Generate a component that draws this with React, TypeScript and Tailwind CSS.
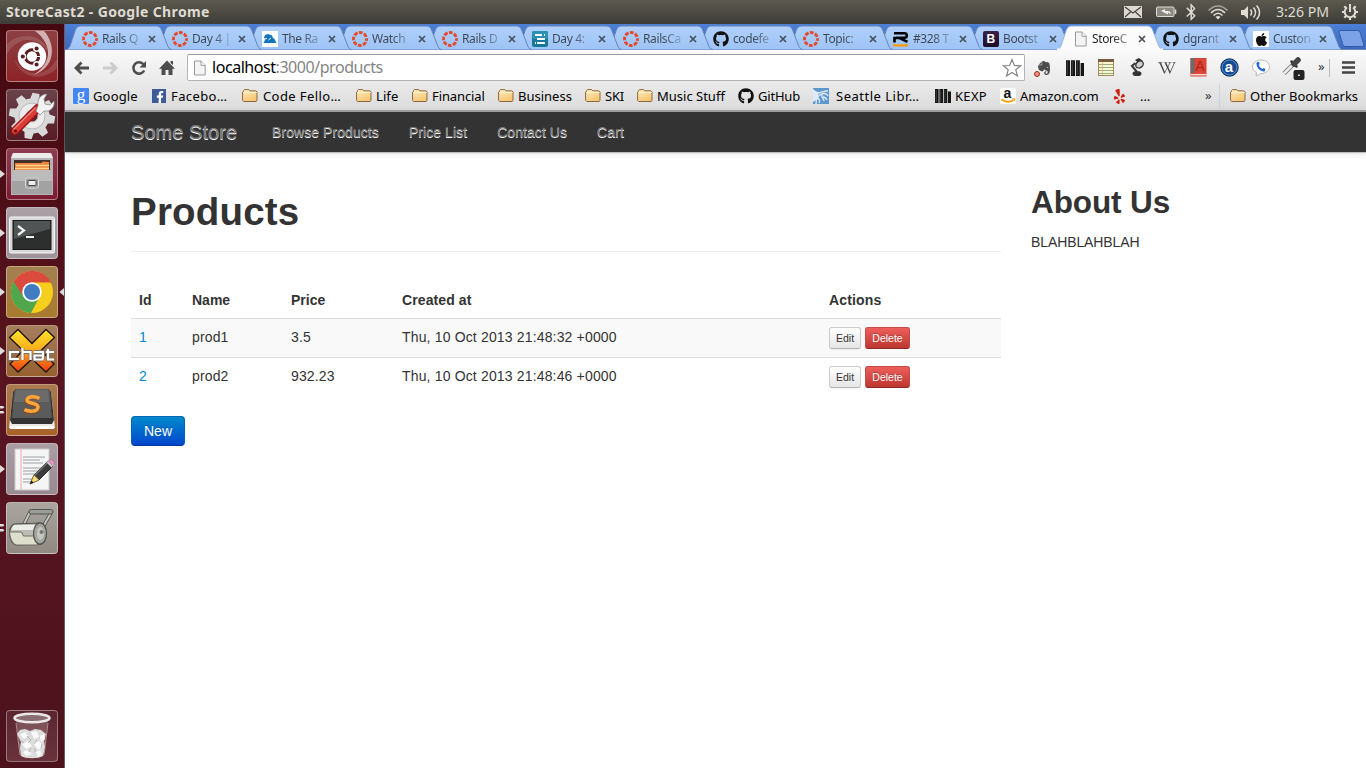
import React from "react";
import { FaGithub, FaApple, FaYelp, FaBluetoothB, FaFacebookF, FaEvernote, FaWikipediaW } from "react-icons/fa";

const UI = "font-['Noto_Sans','Open_Sans',sans-serif]";

/* ---------- small favicons ---------- */

const RailsRing = () => (
  <svg width="16" height="16" viewBox="0 0 16 16">
    <circle cx="8" cy="8" r="6.5" fill="none" stroke="#e5492c" strokeWidth="2.9" strokeDasharray="3.7 1.405" strokeDashoffset="1.85" />
  </svg>
);

const Mountain = () => (
  <svg width="16" height="16" viewBox="0 0 16 16">
    <rect width="16" height="16" fill="#fff" />
    <path d="M1.500 12l1.500-3-1-2.500L3 4l3-1 4 1.500 1 2.500 1.500 1 2 4z" fill="#1277bd" />
    <path d="M2 8l3-.5M6.500 9l2.500-2" stroke="#fff" strokeWidth="1" />
  </svg>
);

const DayIcon = () => (
  <svg width="16" height="16" viewBox="0 0 16 16">
    <rect width="16" height="16" rx="2" fill="#16799c" />
    <rect width="16" height="8" rx="2" fill="#2c91b3" />
    <path d="M3 4h7M5 8h8M5 12h8M12 4h1M3 12h1" stroke="#fff" strokeWidth="2" />
  </svg>
);

const RIcon = () => (
  <svg width="16" height="16" viewBox="0 0 16 16">
    <path d="M1 2.2h10.5a2.3 2.3 0 0 1 0 4.6H3M1.5 11.5V7h5l8 3.8" fill="none" stroke="#000" strokeWidth="2.6" />
    <rect x="0" y="13.3" width="15" height="2.2" fill="#f90" />
  </svg>
);

const BIcon = () => (
  <div className="flex h-4 w-4 items-center justify-center rounded-[2px] bg-linear-to-b from-[#3c2148] to-[#1d0c28] font-['Liberation_Sans',sans-serif] text-[12px] leading-none font-bold text-white">
    B
  </div>
);

const PageIcon = () => (
  <svg width="14" height="16" viewBox="0 0 14 16">
    <path d="M1.5 1h6.7l4 4v10H1.5z" fill="#f4f4f4" stroke="#999" />
    <path d="M8 1v4.3h4.3" fill="#fff" stroke="#999" />
  </svg>
);

const AppleFav = () => (
  <div className="flex h-4 w-4 items-center justify-center bg-white">
    <FaApple size={15} color="#111" />
  </div>
);

const Folder = () => (
  <svg width="16" height="16" viewBox="0 0 16 16">
    <defs>
      <linearGradient id="fold" x1="0" y1="0" x2="0.5" y2="1">
        <stop offset="0" stopColor="#fdeec0" />
        <stop offset="1" stopColor="#f6c674" />
      </linearGradient>
    </defs>
    <path d="M1.5 3.5v-1l.8-.9h4.5l1 1.2h6l1.2 1v8.800l-1 .9H1.600l-1-1V4z" fill="url(#fold)" stroke="#8d6840" strokeWidth="1" />
    <path d="M1.5 4.5h13" stroke="#fff3d0" strokeWidth="1" />
  </svg>
);

const GoogleFav = () => (
  <div className="flex h-4 w-4 items-center justify-center rounded-[1px] bg-[#4285f4] pb-[3px] font-['Liberation_Serif',serif] text-[17px] leading-none text-white">
    g
  </div>
);

const FbFav = () => (
  <div className="flex h-[14px] w-[14px] items-end justify-end bg-[#3f5a99]">
    <FaFacebookF size={12} color="#fff" />
  </div>
);

const LibFav = () => (
  <svg width="16" height="16" viewBox="0 0 16 16">
    <rect width="16" height="16" fill="#5f97cd" />
    <path d="M0 1c2 2 4 3 6 3l-1 2c1 3-1 6-5 8z" fill="#dcebf7" />
    <path d="M3 16c0-5 2-9 6-10 3-1 5 0 6 2M6 15c1-2 0-4-1-5M9 7c-1 3 2 4 2 6M10 9c2 0 3 1 4 3M5 5c3 0 5-2 10-2" fill="none" stroke="#dcebf7" strokeWidth="1.400" />
  </svg>
);

const Bars = ({ size = 16 }: { size?: number }) => (
  <svg width={size} height={size} viewBox="0 0 16 16">
    <path d="M0 1h3.600v14H0zM4.400 1H8v14H4.400zM8.800 1h3.500v14H8.800zM13 3.500h3v11.500h-3z" fill="#161616" />
    <path d="M1.200 2v12M5.600 2v12M10 2v12" stroke="#666" strokeWidth=".5" />
  </svg>
);

const AmazonFav = () => (
  <div className="flex h-4 w-4 items-center justify-center rounded-[2px] bg-white">
    <svg width="16" height="16" viewBox="0 0 16 16" className="overflow-visible">
      <text x="3.600" y="9.800" fontFamily="Liberation Sans" fontWeight="bold" fontSize="14" fill="#111">a</text>
      <path d="M1.500 11.500c4 3 9 3 12 .7" fill="none" stroke="#f90" strokeWidth="1.600" />
      <path d="M11.800 11l3-.3-.8 2.800" fill="none" stroke="#f90" />
    </svg>
  </div>
);

/* ---------- tabs ---------- */

type Tab = { icon: React.ReactNode; text: string; active?: boolean };

const tabs: Tab[] = [
  { icon: <RailsRing />, text: "Rails Q" },
  { icon: <RailsRing />, text: "Day 4 |" },
  { icon: <Mountain />, text: "The Ra" },
  { icon: <RailsRing />, text: "Watch" },
  { icon: <RailsRing />, text: "Rails D" },
  { icon: <DayIcon />, text: "Day 4:" },
  { icon: <RailsRing />, text: "RailsCa" },
  { icon: <FaGithub size={16} color="#111" />, text: "codefe" },
  { icon: <RailsRing />, text: "Topic:" },
  { icon: <RIcon />, text: "#328 T" },
  { icon: <BIcon />, text: "Bootst" },
  { icon: <PageIcon />, text: "StoreC", active: true },
  { icon: <FaGithub size={16} color="#111" />, text: "dgrant" },
  { icon: <AppleFav />, text: "Custon" },
];

const TabItem = ({ tab, z }: { tab: Tab; z: number }) => (
  <div className="relative flex h-[26px] w-[90.1px] shrink-0 items-center pt-1 pl-[17px]" style={{ zIndex: z }}>
    <svg className="absolute top-0 left-0" width="108" height="26" viewBox="0 0 108 26">
      <defs>
        <linearGradient id="tabblue" x1="0" y1="0" x2="0" y2="1">
          <stop offset="0" stopColor="#b0d0fa" />
          <stop offset="1" stopColor="#9dc3f5" />
        </linearGradient>
      </defs>
      <path
        d="M1 26C4 25 5 22 6 19L10 7C11.500 3 13 2 16 2H91C94 2 95.500 3 97 7L102 20C103 23 104 25 107 26Z"
        fill={tab.active ? "#fbfbfb" : "url(#tabblue)"}
        stroke={tab.active ? "#9fb4d6" : "#6585b8"}
        strokeWidth="1"
      />
      {tab.active && <path d="M1 25.500H107" stroke="#fbfbfb" strokeWidth="2" />}
    </svg>
    <span className="relative flex h-4 w-4 items-center justify-center">{tab.icon}</span>
    <span className="relative ml-1 flex w-[38px] pb-[2px]">
      <span
        className={`${UI} w-[44px] shrink-0 origin-left scale-x-[0.92] bg-linear-to-r bg-clip-text text-[13px] leading-[18px] tracking-[-0.4px] whitespace-nowrap text-transparent ${
          tab.active ? "from-[#222] from-50% to-[#22222230]" : "from-[#3c4654] from-50% to-[#3c465420]"
        }`}
      >
        {tab.text}
      </span>
    </span>
    <svg className="relative ml-[8px] shrink-0" width="8" height="8" viewBox="0 0 8 8">
      <path d="M1 1l6 6M7 1L1 7" stroke="#46505e" strokeWidth="1.700" />
    </svg>
  </div>
);

/* ---------- bookmarks ---------- */

const bookmarks: { icon: React.ReactNode; text: string; w: string; gap: string; track: string }[] = [
  { icon: <GoogleFav />, text: "Google", w: "w-[79px]", gap: "gap-1", track: "tracking-[0.15px]" },
  { icon: <FbFav />, text: "Facebo…", w: "w-[90px]", gap: "gap-[5px]", track: "tracking-[0.4px]" },
  { icon: <Folder />, text: "Code Fello…", w: "w-[114px]", gap: "gap-[5px]", track: "tracking-[0.4px]" },
  { icon: <Folder />, text: "Life", w: "w-[56px]", gap: "gap-1", track: "tracking-[0.1px]" },
  { icon: <Folder />, text: "Financial", w: "w-[86px]", gap: "gap-1", track: "tracking-[-0.1px]" },
  { icon: <Folder />, text: "Business", w: "w-[87px]", gap: "gap-1", track: "tracking-[0px]" },
  { icon: <Folder />, text: "SKI", w: "w-[52px]", gap: "gap-1", track: "tracking-[-0.2px]" },
  { icon: <Folder />, text: "Music Stuff", w: "w-[101px]", gap: "gap-1", track: "tracking-[0px]" },
  { icon: <FaGithub size={16} color="#111" />, text: "GitHub", w: "w-[75px]", gap: "gap-1", track: "tracking-[-0.2px]" },
  { icon: <LibFav />, text: "Seattle Libr…", w: "w-[122px]", gap: "gap-[7px]", track: "tracking-[0.5px]" },
  { icon: <Bars />, text: "KEXP", w: "w-[65px]", gap: "gap-1", track: "tracking-[0.3px]" },
  { icon: <AmazonFav />, text: "Amazon.com", w: "w-[112px]", gap: "gap-1", track: "tracking-[-0.1px]" },
  { icon: <FaYelp size={15} color="#cc1f10" />, text: "…", w: "w-[92px]", gap: "gap-[13px]", track: "tracking-[0px]" },
];

/* ---------- launcher ---------- */

const Gear = () => (
  <svg width="50" height="50" viewBox="1 1 50 50">
    <g fill="#d9d9d9">
      {[0, 45, 90, 135, 180, 225, 270, 315].map((a) => (
        <path key={a} d="M21 12l1.500-8h7l1.500 8z" transform={`rotate(${a + 10} 26 27)`} />
      ))}
      <circle cx="26" cy="27" r="17.500" />
    </g>
    <circle cx="26" cy="27" r="13" fill="#ececec" stroke="#bbb" />
    <circle cx="26" cy="27" r="6" fill="#6b2028" stroke="#bbb" />
    <path d="M9 42L32 19" stroke="#941212" strokeWidth="8.500" strokeLinecap="round" />
    <path d="M9 42L31 20" stroke="#db3c35" strokeWidth="6" strokeLinecap="round" />
    <path d="M8 40L29 19" stroke="#f08880" strokeWidth="1.300" strokeLinecap="round" />
    <circle cx="9.500" cy="42" r="1.500" fill="#5a0e0e" />
    <path d="M30 22l2-5c-1-7 3-12 9-12l-3 5 1 5 5 1 4-4c1 6-3 11-10 10l-4 4z" fill="#f3f3f3" stroke="#8c8c8c" strokeWidth=".8" />
  </svg>
);

const UbuntuLogo = () => (
  <svg width="50" height="50" viewBox="1 1 50 50">
    <g fill="#fff" fillOpacity=".13">
      <path d="M1 14C14 2 38 2 44 25C40 16 30 9 20 10C12 11 6 16 1 24z" />
      <path d="M51 38C38 52 14 50 8 28C12 37 22 44 32 43C40 42 46 37 51 29z" />
      <path d="M38 1C50 14 50 38 27 45C36 40 43 31 42 21C41 13 36 6 29 1z" fillOpacity=".6" />
    </g>
    <circle cx="26" cy="26.500" r="14.200" fill="#fff" />
    <circle cx="26" cy="26.500" r="6.700" fill="none" stroke="#591c20" strokeWidth="3" />
    <g stroke="#fff" strokeWidth="1.400" fill="#591c20">
      <circle cx="16.800" cy="26.500" r="2.800" />
      <circle cx="30.600" cy="18.500" r="2.800" />
      <circle cx="30.600" cy="34.500" r="2.800" />
    </g>
    <path d="M31 26.500h4M22 19.500l-2-3.500M22 33.500l-2 3.500" stroke="#fff" strokeWidth="1.200" />
  </svg>
);

const Files = () => (
  <svg width="50" height="50" viewBox="1 1 50 50">
    <path d="M7 5h38l2 4v38H5V9z" fill="#b4b4b4" />
    <path d="M7 5h38l1.500 5h-41z" fill="#ececec" />
    <rect x="8" y="12" width="36" height="13" fill="#40302a" />
    <path d="M9 15h26l2-1.500 6 .5v9H9z" fill="#e9863c" />
    <path d="M10 17.500h33M9 20.500h34" stroke="#fbd38a" strokeWidth="1.300" />
    <path d="M7 22h38l1 2v22H6V24z" fill="#a2a2a2" />
    <path d="M7 22h38l1 2v9H6v-9z" fill="#bcbcbc" />
    <rect x="19.500" y="30" width="13" height="10" rx="2" fill="#999" stroke="#d8d8d8" />
    <rect x="22" y="32.500" width="8" height="5" rx="1" fill="#eee" stroke="#444" />
  </svg>
);

const Terminal = () => (
  <svg width="50" height="50" viewBox="1 1 50 50">
    <rect x="3.500" y="10" width="45" height="36" rx="1.500" fill="#d9d9d9" stroke="#f6f6f6" />
    <rect x="7" y="13.500" width="38" height="29" fill="#2d2f2f" stroke="#191919" />
    <path d="M8 14h36v8L8 32z" fill="#515454" />
    <path d="M12 19l6 4.500-6 4.500" fill="none" stroke="#f0f0f0" strokeWidth="2.200" />
    <path d="M20 30h8" stroke="#f0f0f0" strokeWidth="2" />
  </svg>
);

const Chrome = () => (
  <svg width="50" height="50" viewBox="1 1 50 50">
    <circle cx="26" cy="26" r="21" fill="#f5cf1b" />
    <path d="M26 26L7.800 15.500A21 21 0 0 0 25 47l9-17z" fill="#4fa64b" />
    <path d="M26 16.500H45.100A21 21 0 0 0 7.800 15.500L17 30z" fill="#dc4a3e" />
    <circle cx="26" cy="26" r="9.800" fill="#fff" />
    <circle cx="26" cy="26" r="8" fill="#3f7cc0" />
  </svg>
);

const XChat = () => (
  <svg width="50" height="50" viewBox="1 1 50 50">
    <defs>
      <linearGradient id="xg" x1="0" y1="0" x2="0" y2="1">
        <stop offset="0" stopColor="#ffe62b" />
        <stop offset=".5" stopColor="#fba81b" />
        <stop offset="1" stopColor="#f23c10" />
      </linearGradient>
    </defs>
    <path d="M12 4.500l14 14 14-14 8.500 8L35 25.500 48 39l-8 8-14-13-14 13-8-8 13-13.500L3.500 12.500z" fill="url(#xg)" stroke="#1b1208" strokeWidth="1.300" />
    <g fill="none" strokeLinejoin="miter">
      <path d="M13 27H4v7h9M16.500 23v12M16.500 27h8v8M28 27h9v7.500M37 30.500h-8.500v4H37M42 24v10.500h6M40 27h8" stroke="#77706a" strokeWidth="3.800" />
      <path d="M13 27H4v7h9M16.500 23v12M16.500 27h8v8M28 27h9v7.500M37 30.500h-8.500v4H37M42 24v10.500h6M40 27h8" stroke="#fff" strokeWidth="2.200" />
    </g>
  </svg>
);

const Sublime = () => (
  <svg width="50" height="50" viewBox="1 1 50 50">
    <path d="M7 8h38l4 36H3z" fill="#e9e9e6" />
    <path d="M4 42h44v3H4z" fill="#fff" />
    <path d="M10 5h32l3 3 3 28-2 4H6l-2-4L7 8z" fill="#333" />
    <path d="M10 5h32l2 3 2 26H6L8 8z" fill="#5b5b5b" />
    <path d="M10 6h32l1 12H8z" fill="#6b6b6b" />
    <path d="M33.500 15.500c-3-2-11-3-12.500 1-1 5 12 2.500 11 8-1 5-10 4-13.500 2" fill="none" stroke="#8f4312" strokeOpacity=".5" strokeWidth="5.500" />
    <path d="M33.500 14.500c-3-2-11-3-12.500 1-1 5 12 2.500 11 8-1 5-10 4-13.500 2" fill="none" stroke="#ffa53a" strokeWidth="3.500" />
  </svg>
);

const Gedit = () => (
  <svg width="50" height="50" viewBox="1 1 50 50">
    <rect x="9" y="6" width="34" height="41" fill="#f5f5f6" stroke="#c9c9cc" />
    <path d="M15 6v41" stroke="#f0aaa5" />
    <path d="M17 14h22M17 17h17M17 20h20M17 25h22M17 28h19M17 31h20M17 36h12M17 39h9" stroke="#9fa1a8" strokeWidth="1" />
    <path d="M24 41l4-9 14-14 5 5-14 14z" fill="#3b3b3b" stroke="#161616" strokeWidth=".8" />
    <path d="M29 32L42 19" stroke="#777" strokeWidth="1.500" />
    <path d="M24 41l4-9 5 5z" fill="#f2de72" stroke="#81712f" strokeWidth=".6" />
    <path d="M24 41l1.500-3.500 2 2z" fill="#111" />
    <path d="M40.500 19.500l3-3 5 5-3 3z" fill="#d0d0d0" />
    <path d="M42.500 18l1-1c3-1.500 6 2 4 4.500l-1 1z" fill="#e79ac4" stroke="#a45f86" strokeWidth=".6" />
  </svg>
);

const Roller = () => (
  <svg width="50" height="50" viewBox="1 1 50 50">
    <path d="M17 24l7-14M34 30l11-19" stroke="#555753" strokeWidth="3.600" />
    <path d="M17 24l7-14M34 30l11-19" stroke="#c6c8c3" strokeWidth="1.800" />
    <rect x="23" y="7.500" width="24" height="4.500" rx="2.200" fill="#9a9d95" stroke="#555753" />
    <path d="M8 22l26-1v21l-24 1c-8-3-8-18-2-21z" fill="#bdbdb5" stroke="#4e504c" strokeWidth="1.200" />
    <path d="M8 23h25v5H5z" fill="#ecece8" />
    <path d="M3.500 30h12l2 4h14v9H10c-4-2-6-7-6.500-13z" fill="#dddecb" stroke="#6e7068" />
    <ellipse cx="34" cy="31.500" rx="6.500" ry="10.700" fill="#a3a59f" stroke="#4e504c" strokeWidth="1.200" />
    <ellipse cx="34.500" cy="31.500" rx="3.500" ry="6.500" fill="#c5c6c0" />
    <circle cx="35.500" cy="30" r="2" fill="#777" />
  </svg>
);

const Trash = () => (
  <svg width="50" height="50" viewBox="1 1 50 50">
    <path d="M10 9l4 36c3 4 21 4 24 0l4-36z" fill="#b99aa0" fillOpacity=".35" />
    <path d="M11 24l3-4 5-1 5 2 5-2 6 1 5 4-2 7 1 6-2 9c-5 3-17 3-22 0l-1-8 1-6z" fill="#dcdcdc" />
    <path d="M14 25l5-3 3 4-4 3zM25 22l6-1 2 6-5 2zM34 26l4-2 1 5-4 3zM16 34l6-3 4 5-6 3zM27 33l6-2 4 5-5 4zM17 42l4-2 5 4-6 2zM30 42l4-2 2 4-4 3z" fill="#fafafa" />
    <path d="M21 26l4 4-3 3M31 30l-3 4M15 31l3 2M36 34l-1 4M25 38l-2 4M29 38v4" fill="none" stroke="#b4b4b4" strokeWidth="1" />
    <ellipse cx="26" cy="8" rx="17.500" ry="4.300" fill="#8a6d72" stroke="#e8e8e8" strokeWidth="2.600" />
    <path d="M10 13l4 32M42 13l-4 32" stroke="#d6c6c9" strokeOpacity=".6" />
  </svg>
);

type Pip = "none" | "one" | "two" | "both";

const launcher: { icon: React.ReactNode; bg: string; pip: Pip }[] = [
  { icon: <UbuntuLogo />, bg: "from-[#8c4043] to-[#8d2227]", pip: "none" },
  { icon: <Gear />, bg: "from-[#6b434a] to-[#571b26]", pip: "none" },
  { icon: <Files />, bg: "from-[#8d3d50] to-[#7d1a32]", pip: "one" },
  { icon: <Terminal />, bg: "from-[#aaa0a5] to-[#9e9399]", pip: "one" },
  { icon: <Chrome />, bg: "from-[#a28052] to-[#a97b2d]", pip: "both" },
  { icon: <XChat />, bg: "from-[#a47e5e] to-[#97602f]", pip: "one" },
  { icon: <Sublime />, bg: "from-[#a97a52] to-[#a66329]", pip: "two" },
  { icon: <Gedit />, bg: "from-[#aa9ea3] to-[#998a92]", pip: "one" },
  { icon: <Roller />, bg: "from-[#aaa59f] to-[#918a82]", pip: "two" },
];

const Tile = ({ icon, bg, pip }: { icon: React.ReactNode; bg: string; pip: Pip }) => (
  <div className="flex h-[52px] w-full items-center">
    <div className="flex w-[6px] shrink-0 items-center">
      {pip !== "none" && (
        <svg width="5" height="10" viewBox="0 0 5 10">
          {pip === "two" ? (
            <path d="M0 1h3l1.500 1.200L3 3.500H0zM0 6h3l1.500 1.200L3 8.500H0z" fill="#ddd" />
          ) : (
            <path d="M0 1l5 4-5 4z" fill="#ddd" />
          )}
        </svg>
      )}
    </div>
    <div className={`flex h-[52px] w-[52px] shrink-0 items-center justify-center overflow-hidden rounded-[4px] border border-white/35 bg-linear-to-b ${bg}`}>{icon}</div>
    {pip === "both" && (
      <svg width="5" height="10" viewBox="0 0 5 10" className="ml-[1px]">
        <path d="M5 1L.5 5 5 9z" fill="#ddd" />
      </svg>
    )}
  </div>
);

/* ---------- page ---------- */

const rows = [
  { id: "1", name: "prod1", price: "3.5", created: "Thu, 10 Oct 2013 21:48:32 +0000" },
  { id: "2", name: "prod2", price: "932.23", created: "Thu, 10 Oct 2013 21:48:46 +0000" },
];

const Store = () => (
  <div className="flex min-h-0 flex-1 flex-col bg-white font-['Liberation_Sans',Arial,sans-serif] text-[14px] leading-5 text-[#333]">
    <nav className="flex h-10 shrink-0 items-center bg-[#333] pl-[66px] shadow-[0_1px_1px_rgba(0,0,0,0.2),0_1px_8px_rgba(0,0,0,0.12)]">
      <span className="w-[141px] text-[20px] tracking-[0.05px] text-[#777] [text-shadow:0_1px_0_#fff]">Some Store</span>
      <div className="flex gap-[30px] tracking-[0.07px] text-[#777] [text-shadow:0_1px_0_#fff]">
        <span>Browse Products</span>
        <span>Price List</span>
        <span>Contact Us</span>
        <span>Cart</span>
      </div>
    </nav>
    <div className="flex gap-[30px] pl-[66px]">
      <main className="w-[870px]">
        <h1 className="mt-[40px] border-b border-[#eee] pb-[19px] text-[38.5px] leading-[40px] font-bold tracking-[0.2px]">Products</h1>
        <table className="mt-[30px] w-[870px] table-fixed border-collapse text-left">
          <thead>
            <tr className="h-9">
              <th className="w-[53px] px-2">Id</th>
              <th className="w-[99px] px-2">Name</th>
              <th className="w-[111px] px-2">Price</th>
              <th className="w-[427px] px-2 tracking-[0.1px]">Created at</th>
              <th className="px-2 tracking-[0.15px]">Actions</th>
            </tr>
          </thead>
          <tbody>
            {rows.map((r) => (
              <tr key={r.id} className="h-[39px] border-t border-[#ddd] align-top odd:bg-[#f9f9f9]">
                <td className="px-2 pt-2 text-[#08c]">{r.id}</td>
                <td className="px-2 pt-2 tracking-[0.15px]">{r.name}</td>
                <td className="px-2 pt-2 tracking-[0.15px]">{r.price}</td>
                <td className="px-2 pt-2 tracking-[0.16px]">{r.created}</td>
                <td className="px-2 pt-2">
                  <div className="flex gap-1 text-[10.5px]">
                    <button className="h-[22px] w-8 rounded-[3px] border border-[#ccc] border-b-[#b3b3b3] bg-linear-to-b from-white to-[#e6e6e6] shadow-[0_1px_2px_rgba(0,0,0,0.05)]">
                      Edit
                    </button>
                    <button className="h-[22px] w-[45px] rounded-[3px] border border-[#c44b46] border-b-[#8f2a25] bg-linear-to-b from-[#ee5f5b] to-[#bd362f] text-white [text-shadow:0_-1px_0_rgba(0,0,0,0.25)]">
                      Delete
                    </button>
                  </div>
                </td>
              </tr>
            ))}
          </tbody>
        </table>
        <button className="mt-5 h-[30px] w-[54px] rounded-[4px] border border-[#0064b8] border-b-[#003899] bg-linear-to-b from-[#0088cc] to-[#0044cc] text-white [text-shadow:0_-1px_0_rgba(0,0,0,0.25)]">
          New
        </button>
      </main>
      <aside>
        <h2 className="mt-[30px] text-[31.5px] leading-[40px] font-bold tracking-[-0.1px]">About Us</h2>
        <p className="mt-[10px] tracking-[-0.1px]">BLAHBLAHBLAH</p>
      </aside>
    </div>
  </div>
);

const Slot = ({ children, w }: { children: React.ReactNode; w: string }) => (
  <span className={`flex shrink-0 items-center justify-center ${w}`}>{children}</span>
);

export default function App() {
  return (
    <div className="flex h-screen w-screen flex-col overflow-hidden">
      <header className={`${UI} flex h-6 shrink-0 items-center bg-linear-to-b from-[#5c5a4e] to-[#3d3c37] pl-[6px] text-[14px] text-[#dfdbd2]`}>
        <span className="flex-1 leading-6 font-bold tracking-[0.35px]">StoreCast2 - Google Chrome</span>
        <svg width="242" height="24" viewBox="1124 0 242 24" fill="none" stroke="#dfdbd2">
          <rect x="1124" y="6" width="18" height="12" fill="#dfdbd2" stroke="none" />
          <path d="M1125 7l8 6 8-6M1125 17l5.500-5M1141 17l-5.500-5" stroke="#46443e" strokeWidth="1.200" />
          <rect x="1156.500" y="7" width="17.500" height="9.500" rx="1" fill="#8c8981" strokeWidth="1" />
          <path d="M1175.500 9.500v4.500" strokeWidth="1.600" />
          <path d="M1161 11l4-2v2h2l3 .5 1 3-3-2v2l-4-2z" fill="#eee" stroke="none" />
          <g transform="translate(1182 3)">
            <FaBluetoothB size={18} color="#dfdbd2" stroke="none" />
          </g>
          <path d="M1208.500 10.500c6-6 13-6 19 0" strokeOpacity=".6" strokeWidth="1.600" />
          <path d="M1211 13c4.500-4.500 9.500-4.500 14 0M1213.500 15.500c3-3 6-3 9 0" strokeWidth="1.600" />
          <path d="M1215.500 17l2.500 2.500 2.500-2.500c-1.500-1.300-3.500-1.300-5 0z" fill="#dfdbd2" stroke="none" />
          <path d="M1241 10h3l4-4v13l-4-4h-3z" fill="#dfdbd2" stroke="none" />
          <path d="M1250.500 9.500c1.500 2 1.500 4 0 6M1253.500 7.500c2.500 3 2.500 7 0 10M1256.500 5.500c4 4 4 10 0 14" strokeWidth="1.500" />
          <text x="1276" y="17" fontFamily="Noto Sans" fontSize="14" fill="#dfdbd2" stroke="none" textLength="53" lengthAdjust="spacingAndGlyphs">3:26 PM</text>
          <path d="M1347 7.500a5.300 5.300 0 1 0 6 0" strokeWidth="2" />
          <path d="M1350 4v8" strokeWidth="2" />
          <path d="M1342 12h2.500M1355.500 12h2.500M1344.300 6.300l2 2M1355.700 6.300l-2 2M1344.300 17.700l2-2M1355.700 17.700l-2-2M1350 17.500v2.500" strokeWidth="2.200" />
        </svg>
      </header>

      <div className="flex min-h-0 flex-1">
        <aside className="flex w-[65px] shrink-0 flex-col justify-between border-r border-[#6e5a68] bg-linear-to-b from-[#45080f] via-[#591521] to-[#4c121c] pt-[6px] pb-[6px]">
          <div className="flex flex-col gap-[7px]">
            {launcher.map((l, i) => (
              <Tile key={i} {...l} />
            ))}
          </div>
          <Tile icon={<Trash />} bg="from-[#5b2630] to-[#6a333c]" pip="none" />
        </aside>

        <div className="flex min-w-0 flex-1 flex-col">
          <div className="flex h-[26px] shrink-0 overflow-hidden bg-linear-to-b from-[#4d7fd6] to-[#3c69bd] shadow-[inset_0_-1px_0_#6a86b4]">
            {tabs.map((t, i) => (
              <TabItem key={i} tab={t} z={t.active ? 30 : 20 - i} />
            ))}
            <svg className="mt-[6px] ml-[12px] shrink-0" width="26" height="17" viewBox="0 0 26 17">
              <path d="M3 .5h16c2 0 3 1 3.500 3l3 10c.5 2 0 3-2 3H8c-2 0-3-1-3.500-3l-3-10C1 1.500 1 .5 3 .5z" fill="#7ba2e6" stroke="#3259a5" />
            </svg>
          </div>

          <div className="flex h-[62px] shrink-0 flex-col border-b-2 border-[#a2a2a2] bg-linear-to-b from-[#fafafa] to-[#dcdcdc]">
            <div className="flex h-[34px] shrink-0 items-center pt-px pl-[3px]">
              <Slot w="w-7">
                <svg width="16" height="14" viewBox="0 0 16 14" fill="none" stroke="#4d4d4d" strokeWidth="2.800">
                  <path d="M15 7H2M7.500 1.500L2 7l5.500 5.500" />
                </svg>
              </Slot>
              <Slot w="w-7">
                <svg width="16" height="14" viewBox="0 0 16 14" fill="none" stroke="#ccc" strokeWidth="2.800">
                  <path d="M1 7h13M8.500 1.500L14 7l-5.500 5.500" />
                </svg>
              </Slot>
              <Slot w="w-[29px]">
                <svg width="16" height="16" viewBox="0 0 16 16">
                  <path d="M13.200 10.500a5.700 5.700 0 1 1-.7-6.200" fill="none" stroke="#4d4d4d" strokeWidth="2.500" />
                  <path d="M15 1v6.500H8.500z" fill="#4d4d4d" />
                </svg>
              </Slot>
              <Slot w="w-7">
                <svg width="16" height="16" viewBox="0 0 16 16">
                  <path d="M8 .5l8 8.200h-2.500V15h-4v-5h-3v5h-4V8.700H0zM11.500 1h2.500v4l-2.500-2z" fill="#4d4d4d" />
                </svg>
              </Slot>
              <div className="ml-[6px] flex h-[27px] w-[838px] shrink-0 items-center rounded-[2px] border border-[#b4b4b4] border-t-[#999] bg-white pr-[2px] pl-[5px]">
                <PageIcon />
                <span className={`${UI} ml-[5px] flex-1 pb-[2px] text-[16px] leading-6 tracking-[-0.45px] text-[#858585]`}>
                  <span className="text-black">localhost</span>:3000/products
                </span>
                <svg width="20" height="20" viewBox="0 0 20 20">
                  <path d="M10 1.500l2.400 6 6.300.3-4.900 4 1.700 6.200L10 14.500 4.500 18l1.700-6.200-4.900-4 6.300-.3z" fill="#fff" stroke="#858585" strokeWidth="1.200" />
                </svg>
              </div>
              <Slot w="w-9">
                <span className="relative flex h-[18px] w-[18px] items-center justify-end">
                  <FaEvernote size={16} color="#4c4c4c" />
                  <span className="absolute bottom-0 left-0 h-[6px] w-[6px] rounded-full border border-[#9c2f20] bg-[#f09080]" />
                </span>
              </Slot>
              <Slot w="w-[27px]">
                <Bars size={18} />
              </Slot>
              <Slot w="w-[35px]">
                <svg width="16" height="17" viewBox="0 0 16 17">
                  <rect x=".5" y=".5" width="15" height="16" fill="#f8f6cc" stroke="#a78a58" />
                  <path d="M0 1.500h16" stroke="#7c5c40" strokeWidth="3" />
                  <path d="M1 5.500h14M1 8.500h14M1 11.500h14M1 14.500h14" stroke="#93ad89" />
                  <path d="M4.500 3v13" stroke="#e8a08e" strokeWidth=".7" />
                </svg>
              </Slot>
              <Slot w="w-[27px]">
                <svg width="16" height="19" viewBox="0 0 16 19">
                  <path d="M6 2l4-2 4 3-3 3z" fill="#2b2b2b" />
                  <ellipse cx="10.500" cy="6.500" rx="4" ry="3.200" transform="rotate(-35 10.500 6.500)" fill="#cfcfcf" stroke="#333" strokeWidth="1.300" />
                  <path d="M6.500 5L3 8l5 6" fill="none" stroke="#3c3c3c" strokeWidth="2.200" />
                  <ellipse cx="8" cy="15.500" rx="4.500" ry="2.600" fill="#333" />
                </svg>
              </Slot>
              <Slot w="w-[34px]">
                <FaWikipediaW size={18} color="#484848" />
              </Slot>
              <Slot w="w-[28px]">
                <svg width="17" height="19" viewBox="0 0 17 19">
                  <rect x=".5" y="0" width="16" height="18.500" fill="#dc4437" />
                  <path d="M.5 0h4v15h-4z" fill="#6b6b6b" />
                  <path d="M1 16.700h15.500" stroke="#f5dcd8" strokeWidth="1.500" />
                  <text x="5.200" y="13" fontFamily="Liberation Sans" fontSize="14" fill="#b0241a">A</text>
                </svg>
              </Slot>
              <Slot w="w-[34px]">
                <svg width="19" height="19" viewBox="0 0 19 19">
                  <circle cx="9.500" cy="9.500" r="8.700" fill="#184c8e" stroke="#0b2c57" />
                  <circle cx="9.500" cy="9.500" r="7.500" fill="none" stroke="#68a5df" strokeWidth=".8" />
                  <text x="4.800" y="14" fontFamily="Liberation Sans" fontWeight="bold" fontSize="15" fill="#fff">a</text>
                </svg>
              </Slot>
              <Slot w="w-[29px]">
                <svg width="20" height="18" viewBox="0 0 20 18">
                  <path d="M10 1c5 0 8.500 3 8.500 6.800 0 4-3.500 6.700-8.500 6.700l-5 2.500.5-3.500C2.500 12 1.500 10 1.500 7.800 1.500 4 5 1 10 1z" fill="#fff" stroke="#b9b9b9" />
                  <path d="M6.500 4c.2 4.500 2.500 7 7 7.500" fill="none" stroke="#2468d4" strokeWidth="2.300" />
                  <path d="M6 4.500l2.300-.5M12.500 11.500l1-2" stroke="#2468d4" strokeWidth="2.500" />
                </svg>
              </Slot>
              <Slot w="w-[35px]">
                <svg width="24" height="24" viewBox="0 0 24 24">
                  <path d="M3 17.500L12 8.500" stroke="#777" strokeWidth="4.500" />
                  <path d="M3 17.500L12 8.500" stroke="#ececec" strokeWidth="2.500" />
                  <path d="M10.500 5.500l5 5" stroke="#333" strokeWidth="2.500" strokeLinecap="round" />
                  <path d="M13 8l4-4" stroke="#444" strokeWidth="5.500" strokeLinecap="round" />
                  <rect x="12.500" y="14" width="11" height="10" rx="2" fill="#232323" />
                  <rect x="17.200" y="18.500" width="1.500" height="1.500" fill="#fff" />
                </svg>
              </Slot>
              <span className={`${UI} ml-[6px] flex h-[18px] w-[14px] items-center border-r border-[#bbb] pb-[3px] pl-[2px] text-[13px] leading-none text-[#333]`}>»</span>
              <svg className="ml-[12px]" width="13" height="13" viewBox="0 0 13 13">
                <path d="M0 1.500h13M0 6.500h13M0 11.500h13" stroke="#444" strokeWidth="2.400" />
              </svg>
            </div>

            <div className={`${UI} flex min-h-0 flex-1 items-center pb-[2px] pl-2 text-[13px] leading-5 whitespace-nowrap text-black`}>
              {bookmarks.map((b) => (
                <span key={b.text} className={`flex shrink-0 items-center ${b.w} ${b.gap} ${b.track}`}>
                  {b.icon}
                  <span className="pb-px">{b.text}</span>
                </span>
              ))}
              <span className="mr-[10px] flex h-6 w-[16px] items-center border-r border-[#ccd2e0] pb-[3px] pl-[1px] text-[#333]">»</span>
              <span className="flex items-center gap-1 tracking-[0px]">
                <Folder />
                <span className="pb-px">Other Bookmarks</span>
              </span>
            </div>
          </div>

          <Store />
        </div>
      </div>
    </div>
  );
}
